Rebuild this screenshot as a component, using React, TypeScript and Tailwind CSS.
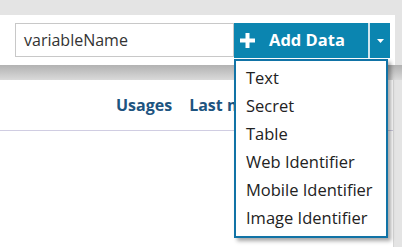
export default function App() {
  const items = ["Text", "Secret", "Table", "Web Identifier", "Mobile Identifier", "Image Identifier"];

  return (
    <div className="relative w-[402px] h-[247px] overflow-hidden bg-[#e4e4e4] font-['Open_Sans',sans-serif]">
      <div className="h-[15px]" />

      {/* toolbar */}
      <div className="mr-[7px] h-[50px] bg-white flex items-start pl-[15px] pt-[8px]">
        <div className="w-[219px] h-[34px] border border-[#c8c8c8] flex items-center pl-[8px] text-[16px] text-[#333]">
          variableName
        </div>
        <div className="h-[35px] flex">
          <button className="w-[134px] h-full bg-[#0b85b0] flex items-center pl-[6px] gap-[14px] text-white font-bold text-[16.5px]">
            <svg width="15" height="15" viewBox="0 0 15 15">
              <path d="M5.5 0h4v5.5h5.5v4h-5.5v5.5h-4v-5.5h-5.5v-4h5.5z" fill="white" />
            </svg>
            Add Data
          </button>
          <div className="w-[2px] bg-[#cfe5ee]" />
          <button className="w-[20px] h-full bg-[#0b85b0] flex items-center justify-center">
            <svg width="7" height="4" viewBox="0 0 7 4">
              <path d="M0 0h7l-3.5 4z" fill="white" />
            </svg>
          </button>
        </div>
      </div>

      {/* shadow band */}
      <div className="h-[15px] bg-gradient-to-b from-[#b2b2b2] to-[#dadada]" />

      {/* content */}
      <div className="mr-[8px] h-[167px] bg-white border-r border-[#d6d6d6]">
        <div className="h-[50px] w-[234px] overflow-hidden flex items-center pl-[116px] gap-[17px] text-[16px] font-bold text-[#1d5480] whitespace-nowrap">
          <span>Usages</span>
          <span>Last m</span>
        </div>
        <div className="h-px bg-[#d0cde2]" />
      </div>

      {/* dropdown menu */}
      <div className="absolute left-[234px] top-[59px] w-[154px] h-[179px] bg-white border-2 border-[#1173a6] shadow-[3px_3px_4px_rgba(0,0,0,0.35)] pt-[3px]">
        {items.map((it) => (
          <div key={it} className="h-[28px] flex items-center pl-[10px] text-[16.5px] text-[#222]">
            {it}
          </div>
        ))}
      </div>
    </div>
  );
}
